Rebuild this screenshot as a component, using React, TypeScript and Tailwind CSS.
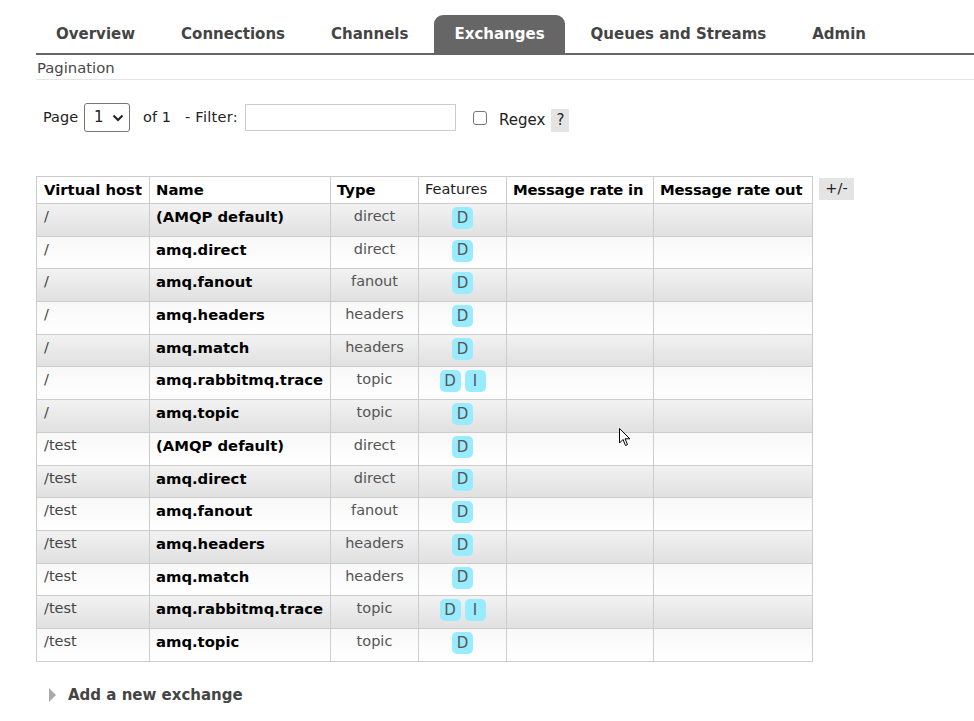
import React from "react";

const tabs = ["Overview", "Connections", "Channels", "Exchanges", "Queues and Streams", "Admin"];

type Row = { vhost: string; name: string; type: string; internal?: boolean };

const names: [string, string, boolean?][] = [
  ["(AMQP default)", "direct"],
  ["amq.direct", "direct"],
  ["amq.fanout", "fanout"],
  ["amq.headers", "headers"],
  ["amq.match", "headers"],
  ["amq.rabbitmq.trace", "topic", true],
  ["amq.topic", "topic"],
];

const rows: Row[] = ["/", "/test"].flatMap((vhost) =>
  names.map(([name, type, internal]) => ({ vhost, name, type, internal }))
);

const Badge = ({ children }: { children: React.ReactNode }) => (
  <span className="inline-flex h-[22px] w-[21px] items-center justify-center rounded-[5px] bg-[#99ebff] text-[15px] text-[#555]">
    {children}
  </span>
);

export default function App() {
  return (
    <div className="relative min-h-[721px] bg-white font-['DejaVu_Sans',Verdana,sans-serif] text-[14.5px] text-[#444]">
      {/* tabs */}
      <div className="pt-[15px] pl-[36px]">
        <ul className="flex border-b-2 border-[#666]">
          {tabs.map((t) => (
            <li
              key={t}
              className={`mr-[6px] flex h-[38px] items-center rounded-t-[9px] px-5 text-[15px] font-bold ${
                t === "Exchanges" ? "bg-[#666] text-white" : "text-[#444]"
              }`}
            >
              {t}
            </li>
          ))}
        </ul>
        <div className="border-b border-[#e4e4e4] pt-[4px] pb-[2px] pl-px text-[14.8px] leading-[18px] text-[#484848]">
          Pagination
        </div>
      </div>

      {/* pagination row */}
      <div className="flex items-center pl-[43px] pt-[23px] text-[#222]">
        <span>Page</span>
        <div className="ml-[6px] flex h-[29px] w-[46px] items-center justify-between rounded-[3px] border border-[#767676] pl-[9px] pr-[5px]">
          <span className="text-[15px]">1</span>
          <svg width="12" height="8" viewBox="0 0 12 8">
            <path d="M1.5 1.5 L6 6 L10.5 1.5" fill="none" stroke="#222" strokeWidth="2" />
          </svg>
        </div>
        <span className="ml-[13px]">of 1</span>
        <span className="ml-[14px] tracking-[0.3px]">- Filter:</span>
        <div className="ml-[7px] h-[27px] w-[211px] border border-[#ccc] bg-white" />
        <div className="ml-[17px] h-[14px] w-[14px] rounded-[3px] border border-[#767676]" />
        <span className="ml-[12px] mt-[6px] text-[15px]">Regex</span>
        <span className="ml-[6px] mt-[6px] flex h-[23px] w-[18px] items-center justify-center bg-[#e4e4e4] text-[15px]">?</span>
      </div>

      {/* table */}
      <div className="flex items-start pl-[36px] pt-[44px]">
        <table className="w-[776px] table-fixed border-collapse border border-[#ccc]">
          <colgroup>
            <col className="w-[113px]" />
            <col className="w-[181px]" />
            <col className="w-[88px]" />
            <col className="w-[88px]" />
            <col className="w-[147px]" />
            <col className="w-[159px]" />
          </colgroup>
          <thead>
            <tr className="h-[27px] bg-white text-left whitespace-nowrap">
              <th className="border border-[#ccc] px-[7px] text-[14.8px] font-bold text-black">Virtual host</th>
              <th className="border border-[#ccc] px-[6px] text-[14.8px] font-bold text-black">Name</th>
              <th className="border border-[#ccc] px-[6px] text-[14.8px] font-bold text-black">Type</th>
              <th className="border border-[#ccc] px-[6px] text-[14.5px] font-normal text-[#222]">Features</th>
              <th className="border border-[#ccc] px-[6px] text-[14.8px] font-bold tracking-[-0.2px] text-black">Message rate in</th>
              <th className="border border-[#ccc] px-[6px] text-[14.8px] font-bold tracking-[-0.2px] text-black">Message rate out</th>
            </tr>
          </thead>
          <tbody>
            {rows.map((r, i) => (
              <tr
                key={i}
                className={`h-[32.7px] whitespace-nowrap ${
                  i % 2 === 0
                    ? "bg-gradient-to-b from-[#f2f2f2] to-[#e0e0e0]"
                    : "bg-gradient-to-b from-[#f8f8f8] to-[#ffffff]"
                }`}
              >
                <td className="border border-[#ccc] px-[7px] pt-[2px] align-top">{r.vhost}</td>
                <td className="border border-[#ccc] px-[6px] pt-[2px] align-top text-[14.8px] font-bold text-black">
                  {r.name}
                </td>
                <td className="border border-[#ccc] pt-[2px] text-center align-top text-[#555]">{r.type}</td>
                <td className="border border-[#ccc] pt-[3px] text-center align-top">
                  <div className="flex justify-center gap-[4px]">
                    <Badge>D</Badge>
                    {r.internal && <Badge>I</Badge>}
                  </div>
                </td>
                <td className="border border-[#ccc]" />
                <td className="border border-[#ccc]" />
              </tr>
            ))}
          </tbody>
        </table>
        <span className="ml-[6px] mt-[2px] flex h-[22px] w-[35px] items-center justify-center bg-[#e4e4e4] text-[#222]">
          +/-
        </span>
      </div>

      {/* add new */}
      <div className="flex items-center pl-[49px] pt-[22px]">
        <svg width="8" height="14" viewBox="0 0 8 14">
          <path d="M0 0 L7 7 L0 14 Z" fill="#aaa" />
        </svg>
        <span className="ml-[11px] text-[15px] font-bold text-[#444]">Add a new exchange</span>
      </div>

      {/* mouse cursor */}
      <svg className="absolute left-[619px] top-[428px]" width="12" height="19" viewBox="0 0 12 19">
        <path d="M0.5 0.5 L0.5 15 L4 11.5 L6.5 17.5 L8.5 16.5 L6 10.8 L10.8 10.8 Z" fill="#fff" stroke="#000" strokeWidth="1" />
      </svg>
    </div>
  );
}
